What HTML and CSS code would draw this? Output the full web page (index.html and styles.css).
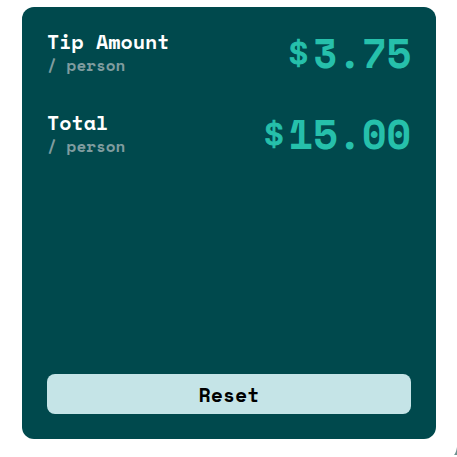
FILE: index.html
```html
<!DOCTYPE html>
<html lang="en">
<head>
<meta charset="utf-8">
<meta name="viewport" content="width=device-width, initial-scale=1">
<title>Tip calculator</title>
<link rel="stylesheet" href="styles.css">
</head>
<body>
<main class="card">
  <section class="row">
    <div>
      <h2 class="label">Tip Amount</h2>
      <p class="per">/ person</p>
    </div>
    <p class="amount"><span class="currency">$</span><span>3.75</span></p>
  </section>
  <section class="row">
    <div>
      <h2 class="label">Total</h2>
      <p class="per">/ person</p>
    </div>
    <p class="amount"><span class="currency">$</span><span>15.00</span></p>
  </section>
  <button class="reset" type="button">Reset</button>
</main>
<svg class="corner" viewBox="0 0 3 8" aria-hidden="true"><path d="M3 0V8H0Q2 6 3 0Z"/></svg>
</body>
</html>
```
FILE: styles.css
```css
* {
  box-sizing: border-box;
  margin: 0;
}

body {
  display: flex;
  min-height: 100vh;
  padding: 7px 21px 18px 22px;
  background: #fff;
  font-family: "Space Mono", "DejaVu Sans Mono", monospace;
  font-weight: 700;
}

.card {
  display: flex;
  flex: 1;
  flex-direction: column;
  gap: 35px;
  padding: 23px 25px 25px;
  border-radius: 12px;
  background: #00494d;
}

.row {
  display: flex;
  justify-content: space-between;
  align-items: center;
}

.label {
  color: #fff;
  font-size: 20px;
  line-height: 24px;
}

.per {
  color: #7f9c9f;
  font-size: 16px;
  line-height: 22px;
}

.amount {
  display: flex;
  align-items: center;
  gap: 5px;
  color: #26c0ab;
  font-size: 40px;
  line-height: 46px;
}

.currency {
  font-family: Inter, "Liberation Sans", sans-serif;
  font-size: 30px;
  font-weight: 500;
  -webkit-text-stroke: 1px;
}

.reset {
  height: 40px;
  margin-top: auto;
  border: 0;
  border-radius: 8px;
  background: #c5e4e7;
  color: #000;
  font: inherit;
  font-size: 20px;
  cursor: pointer;
}

.corner {
  position: absolute;
  right: 0;
  bottom: 2px;
  width: 3px;
  height: 8px;
  fill: #6f9292;
}
```
